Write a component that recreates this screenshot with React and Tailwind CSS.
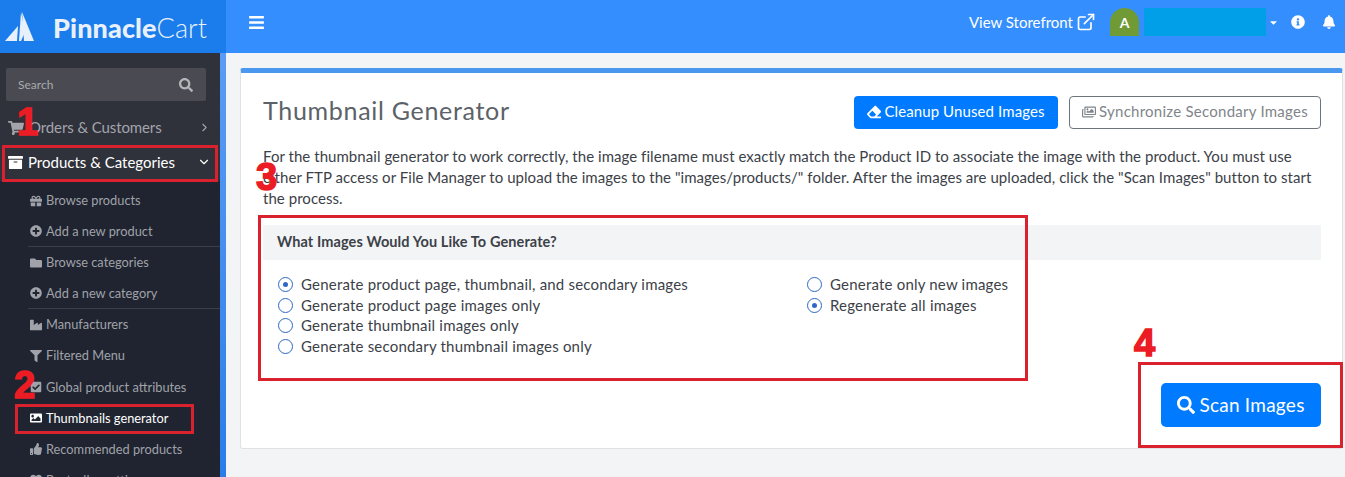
import React from 'react';
import {
  FaShoppingCart, FaArchive, FaGift, FaPlusCircle, FaFolder, FaIndustry, FaFilter,
  FaCheckSquare, FaImage, FaThumbsUp, FaSearch, FaBars, FaInfoCircle, FaBell,
  FaEraser, FaRegImages, FaCaretDown, FaHeart,
} from 'react-icons/fa';
import { FiExternalLink, FiChevronRight, FiChevronDown } from 'react-icons/fi';

const subItems = [
  { label: 'Browse products', icon: FaGift },
  { label: 'Add a new product', icon: FaPlusCircle, divider: true },
  { label: 'Browse categories', icon: FaFolder },
  { label: 'Add a new category', icon: FaPlusCircle, divider: true },
  { label: 'Manufacturers', icon: FaIndustry },
  { label: 'Filtered Menu', icon: FaFilter },
  { label: 'Global product attributes', icon: FaCheckSquare },
  { label: 'Thumbnails generator', icon: FaImage, active: true },
  { label: 'Recommended products', icon: FaThumbsUp },
  { label: 'Bestseller settings', icon: FaHeart },
];

const leftOptions = [
  { label: 'Generate product page, thumbnail, and secondary images', checked: true },
  { label: 'Generate product page images only' },
  { label: 'Generate thumbnail images only' },
  { label: 'Generate secondary thumbnail images only' },
];

const rightOptions = [
  { label: 'Generate only new images' },
  { label: 'Regenerate all images', checked: true },
];

const Radio = ({ label, checked }) => (
  <div className="flex items-center h-[20.7px] gap-[8px]">
    <span className="w-[15px] h-[15px] rounded-full border-[1.5px] border-[#2f68c4] flex items-center justify-center shrink-0">
      {checked && <span className="w-[5px] h-[5px] rounded-full bg-[#2f68c4]" />}
    </span>
    <span className="text-[15px] tracking-[0.2px] text-[#3c4148] whitespace-nowrap">{label}</span>
  </div>
);

const Sidebar = () => (
  <aside className="w-[226px] shrink-0 flex flex-col h-full">
    <div className="h-[53px] bg-[#1b7deb] flex items-center pl-[5px] shrink-0">
      <svg width="30" height="30" viewBox="0 0 30 30" className="shrink-0">
        <path d="M16 0 L20 20 L16 29 L14 29 Z" fill="#e8f1fb" />
        <path d="M17 0 L29 29 L19 29 Z" fill="#e8f1fb" />
        <path d="M13 14 L12 29 L0 29 Z" fill="#e8f1fb" />
      </svg>
      <span className="ml-[18px] text-[27px] leading-[30px] mt-[3px] text-[#e8f1fb] tracking-[0.1px] whitespace-nowrap">
        <span className="font-black">Pinnacle</span>
        <span className="font-light">Cart</span>
      </span>
    </div>
    <div className="flex flex-1 min-h-0">
      <div className="w-[220px] flex flex-col bg-[#1f2430] overflow-hidden">
        <div className="bg-[#2f313b] pt-[15px] px-[6px] h-[128px] shrink-0">
          <div className="h-[33px] w-[200px] bg-[#4a4b52] rounded-[2px] flex items-center justify-between pl-[12px] pr-[13px]">
            <span className="text-[12px] text-[#a8a9ad]">Search</span>
            <FaSearch className="text-[14px] text-[#b5b6ba]" />
          </div>
          <div className="flex items-center justify-between mt-[10px] h-[33px] pl-[2px] pr-[3px] text-[#a3a5ab]">
            <div className="flex items-center gap-[5px]">
              <FaShoppingCart className="text-[16px]" />
              <span className="text-[15px] tracking-[-0.1px]">Orders &amp; Customers</span>
            </div>
            <FiChevronRight className="text-[13px]" />
          </div>
          <div className="flex items-center justify-between h-[36px] pl-[2px] pr-[3px] text-white">
            <div className="flex items-center gap-[5px]">
              <FaArchive className="text-[15px]" />
              <span className="text-[15px]">Products &amp; Categories</span>
            </div>
            <FiChevronDown className="text-[14px]" />
          </div>
        </div>
        <div className="pl-[28px] pt-[4px]">
          {subItems.map((item) => {
            const Icon = item.icon;
            return (
              <div
                key={item.label}
                className={`h-[31.1px] flex items-center gap-[4px] pl-[2px] ${item.active ? 'text-white' : 'text-[#a0a2a9]'} ${item.divider ? 'border-b border-[#3a3e4a]' : ''}`}
              >
                <Icon className="text-[12px] w-[12px] shrink-0" />
                <span className="text-[12.8px] whitespace-nowrap">{item.label}</span>
              </div>
            );
          })}
        </div>
      </div>
      <div className="w-[6px] bg-gradient-to-b from-[#5a9cf5] to-[#2a7de8]" />
    </div>
  </aside>
);

const App = () => (
  <div className="relative flex w-[1345px] h-[477px] overflow-hidden bg-[#f3f4f6] font-['Lato','Noto_Sans',sans-serif]">
    <Sidebar />
    <div className="flex-1 min-w-0 flex flex-col">
      <header className="h-[53px] shrink-0 bg-[#348efe] flex items-center justify-between pl-[22px] pr-[9px] pb-[9px] text-white">
        <FaBars className="text-[17px]" />
        <div className="flex items-center">
          <span className="text-[15px] whitespace-nowrap">View Storefront</span>
          <FiExternalLink className="text-[20px] ml-[3px]" />
          <span className="ml-[14px] w-[29px] h-[28px] rounded-t-full rounded-b-[10px] bg-[#6f9a35] flex items-center justify-center text-[14px] font-bold">A</span>
          <span className="ml-[5px] w-[122px] h-[28px] bg-[#009fe8]" />
          <FaCaretDown className="text-[11px] ml-[2px]" />
          <FaInfoCircle className="text-[14px] ml-[12px]" />
          <FaBell className="text-[14px] ml-[17px]" />
        </div>
      </header>
      <main className="flex-1 pt-[15px] pl-[14px] pr-[2px]">
        <section className="h-[381px] bg-white border border-[#dfe1e4] border-t-[5px] border-t-[#4a97f0] rounded-[3px] pt-[22px] pl-[22px] pr-[21px]">
          <div className="flex items-center justify-between h-[34px]">
            <h1 className="text-[25px] tracking-[0.7px] text-[#5c6268] whitespace-nowrap pb-[2px]">Thumbnail Generator</h1>
            <div className="flex gap-[11px]">
              <button className="h-[33px] w-[204px] bg-[#007bff] text-white rounded-[4px] text-[15px] tracking-[0.1px] flex items-center justify-center gap-[3px] pb-[1px]">
                <FaEraser className="text-[14px]" />
                Cleanup Unused Images
              </button>
              <button className="h-[33px] w-[252px] border border-[#6c757d] text-[#7f858b] rounded-[4px] text-[15px] tracking-[0.25px] flex items-center justify-center gap-[3px] pb-[1px]">
                <FaRegImages className="text-[14px]" />
                Synchronize Secondary Images
              </button>
            </div>
          </div>
          <p className="mt-[17px] text-[15px] tracking-[0.05px] leading-[21px] text-[#3c4148]">
            For the thumbnail generator to work correctly, the image filename must exactly match the Product ID to associate the image with the product. You must use either FTP access or File Manager to upload the images to the "images/products/" folder. After the images are uploaded, click the "Scan Images" button to start the process.
          </p>
          <div className="mt-[16px] h-[35px] bg-[#f3f4f6] flex items-center pl-[14px] pb-[1px] text-[14.5px] tracking-[0.1px] font-bold text-[#3c4148]">
            What Images Would You Like To Generate?
          </div>
          <div className="flex mt-[14px] pl-[15px]">
            <div className="w-[529px] flex flex-col">
              {leftOptions.map((o) => <Radio key={o.label} {...o} />)}
            </div>
            <div className="flex flex-col">
              {rightOptions.map((o) => <Radio key={o.label} {...o} />)}
            </div>
          </div>
          <div className="flex justify-end mt-[26px]">
            <button className="w-[160px] h-[44px] bg-[#007bff] text-white rounded-[5px] text-[19px] tracking-[0.25px] flex items-center justify-center gap-[4px]">
              <FaSearch className="text-[18px]" />
              Scan Images
            </button>
          </div>
        </section>
      </main>
    </div>

    {/* red annotations drawn over the screenshot */}
    <div className="absolute left-[2px] top-[145px] w-[216px] h-[37px] border-[3px] border-[#d9222e]" />
    <div className="absolute left-[15px] top-[404px] w-[179px] h-[30px] border-[3px] border-[#d9222e]" />
    <div className="absolute left-[258px] top-[215px] w-[770px] h-[166px] border-[3px] border-[#d9222e]" />
    <div className="absolute left-[1138px] top-[362px] w-[205px] h-[86px] border-[3px] border-[#d9222e]" />
    <span className="absolute left-[17px] top-[100px] text-[38px] leading-[44px] font-black text-[#ec1c24] [-webkit-text-stroke:1.5px_#ec1c24] font-['Liberation_Sans',sans-serif]">1</span>
    <span className="absolute left-[14px] top-[363px] text-[38px] leading-[44px] font-black text-[#ec1c24] [-webkit-text-stroke:1.5px_#ec1c24] font-['Liberation_Sans',sans-serif]">2</span>
    <span className="absolute left-[256px] top-[155px] text-[38px] leading-[44px] font-black text-[#ec1c24] [-webkit-text-stroke:1.5px_#ec1c24] font-['Liberation_Sans',sans-serif]">3</span>
    <span className="absolute left-[1134px] top-[321px] text-[38px] leading-[44px] font-black text-[#ec1c24] [-webkit-text-stroke:1.5px_#ec1c24] font-['Liberation_Sans',sans-serif]">4</span>
  </div>
);

export default App;
